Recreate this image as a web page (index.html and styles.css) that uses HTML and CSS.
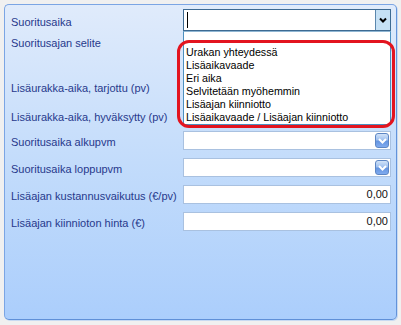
FILE: index.html
```html
<!DOCTYPE html>
<html>
<head>
<meta charset="utf-8">
<link rel="stylesheet" href="styles.css">
</head>
<body>
<div class="panel">
  <div class="form">
    <div class="row r1">
      <span class="label">Suoritusaika</span>
      <div class="combo">
        <span class="caret"></span>
        <span class="cbtn"><svg width="8" height="6" viewBox="0 0 8 6"><polyline points="1,1.5 4,4.5 7,1.5" fill="none" stroke="#000" stroke-width="2"/></svg></span>
      </div>
    </div>
    <div class="row r2"><span class="label">Suoritusajan selite</span></div>
    <div class="row r3"><span class="label">Lisäurakka-aika, tarjottu (pv)</span></div>
    <div class="row r4"><span class="label">Lisäurakka-aika, hyväksytty (pv)</span></div>
    <div class="row rf">
      <span class="label">Suoritusaika alkupvm</span>
      <div class="field"><span class="dbtn"><svg width="9" height="6" viewBox="0 0 9 6"><polyline points="1,1 4.5,4.5 8,1" fill="none" stroke="#fff" stroke-width="2"/></svg></span></div>
    </div>
    <div class="row rf">
      <span class="label">Suoritusaika loppupvm</span>
      <div class="field"><span class="dbtn"><svg width="9" height="6" viewBox="0 0 9 6"><polyline points="1,1 4.5,4.5 8,1" fill="none" stroke="#fff" stroke-width="2"/></svg></span></div>
    </div>
    <div class="row rf">
      <span class="label">Lisäajan kustannusvaikutus (€/pv)</span>
      <div class="field num">0,00</div>
    </div>
    <div class="row rf">
      <span class="label">Lisäajan kiinnioton hinta (€)</span>
      <div class="field num">0,00</div>
    </div>
  </div>
  <ul class="list">
    <li>Urakan yhteydessä</li>
    <li>Lisäaikavaade</li>
    <li>Eri aika</li>
    <li>Selvitetään myöhemmin</li>
    <li>Lisäajan kiinniotto</li>
    <li>Lisäaikavaade / Lisäajan kiinniotto</li>
  </ul>
  <div class="highlight"></div>
</div>
</body>
</html>
```

FILE: styles.css
```css
html, body {
  margin: 0;
  background: #f0f0f0;
}
body {
  padding: 4px;
  font-family: "Liberation Sans", Arial, sans-serif;
}
.panel {
  position: relative;
  box-sizing: border-box;
  width: 393px;
  height: 316px;
  border: 1px solid #7ba5e4;
  border-right-color: #6293da;
  border-bottom-color: #5f90d8;
  border-radius: 5px;
  background: linear-gradient(#e0ebfb, #c3dcfb 50%, #abcefc);
  box-shadow: 1px 1px 0 #c8daf2;
}
.form {
  padding: 4px 0 0 6px;
  display: flex;
  flex-direction: column;
}
.row {
  display: grid;
  grid-template-columns: 172px 208px;
  align-items: center;
}
.r1 { height: 22px; }
.r2 { height: 39px; align-items: start; }
.r3 { height: 33px; }
.r4 { height: 24px; }
.rf { height: 27px; }
.label {
  grid-column: 1;
  font-size: 11px;
  line-height: 14px;
  color: #27398c;
  padding-top: 3px;
  white-space: nowrap;
}
.r2 .label {
  padding-top: 5px;
}
.combo {
  grid-column: 2;
  box-sizing: border-box;
  height: 22px;
  border: 1px solid #3d6a92;
  background: #fff;
  display: flex;
  justify-content: space-between;
  align-items: center;
}
.caret {
  width: 1px;
  height: 16px;
  margin-left: 3px;
  background: #000;
}
.cbtn {
  box-sizing: border-box;
  width: 15px;
  height: 20px;
  border-left: 1px solid #5b87ad;
  background: #c6e1f5;
  display: flex;
  align-items: center;
  justify-content: center;
}
.field {
  grid-column: 2;
  box-sizing: border-box;
  height: 19px;
  border: 1px solid #a9c1e0;
  background: #fff;
  display: flex;
  justify-content: flex-end;
  align-items: center;
  padding-right: 1px;
}
.field.num {
  font-size: 11px;
  color: #111;
  padding-right: 2px;
  line-height: 17px;
}
.dbtn {
  box-sizing: border-box;
  width: 14px;
  height: 15px;
  border: 1px solid #5d86c4;
  border-radius: 3px;
  background: linear-gradient(#d2e3f8, #9fc0ef 45%, #6494e0 55%, #80abef);
  display: flex;
  align-items: center;
  justify-content: center;
}
.list {
  position: absolute;
  left: 178px;
  top: 26px;
  box-sizing: border-box;
  width: 208px;
  height: 94px;
  margin: 0;
  padding: 14px 0 0 2px;
  list-style: none;
  background: #fff;
  border: 1px solid #4c8fbf;
  border-top-color: #8fb6d3;
}
.list li {
  font-size: 10.7px;
  line-height: 13px;
  color: #000;
  white-space: nowrap;
}
.highlight {
  position: absolute;
  left: 172px;
  top: 35px;
  box-sizing: border-box;
  width: 218px;
  height: 88px;
  border: 3px solid #e3141f;
  border-radius: 12px;
}
```
